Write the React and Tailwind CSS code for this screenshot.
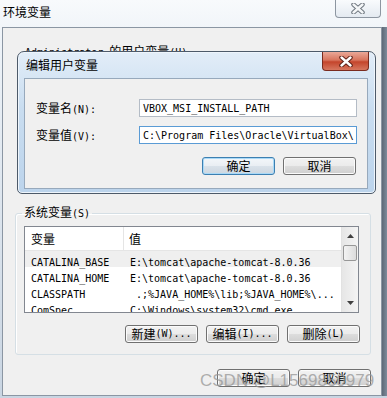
import React from "react";

// ascii parts drawn in a narrow mono face, like SimSun half-width glyphs
const M = ({ children }) => (
  <span className="font-['DejaVu_Sans_Mono',monospace] text-[10px]">{children}</span>
);

const CloseX = ({ edge, fill }) => (
  <svg width="14" height="11" viewBox="0 0 14 11">
    <path d="M2.5 1.5 L11.5 9.5 M11.5 1.5 L2.5 9.5" stroke={edge} strokeWidth="4.4" strokeLinecap="round" fill="none" />
    <path d="M2.5 1.5 L11.5 9.5 M11.5 1.5 L2.5 9.5" stroke={fill} strokeWidth="2.4" strokeLinecap="round" fill="none" />
  </svg>
);

function Btn({ children, focus }) {
  return (
    <div
      className={`flex h-[18px] w-[73px] items-center justify-center rounded-[3px] border text-[12px] leading-none ${
        focus
          ? "border-[#3c7fb1] bg-[linear-gradient(#f3f7fa_0%,#e9eef3_50%,#d9e2ea_50%,#cdd7e0_100%)] shadow-[inset_0_0_0_1px_#a9d9f7]"
          : "border-[#707070] bg-[linear-gradient(#f2f2f2_0%,#ebebeb_50%,#dddddd_50%,#cfcfcf_100%)] shadow-[inset_0_0_0_1px_#fbfbfb]"
      }`}
    >
      {children}
    </div>
  );
}

const Arrow = ({ down }) => (
  <svg width="7" height="4" viewBox="0 0 7 4">
    <path d={down ? "M0 0 H7 L3.5 4 Z" : "M0 4 H7 L3.5 0 Z"} fill="#404040" />
  </svg>
);

const rows = [
  ["CATALINA_BASE", "E:\\tomcat\\apache-tomcat-8.0.36"],
  ["CATALINA_HOME", "E:\\tomcat\\apache-tomcat-8.0.36"],
  ["CLASSPATH", " .;%JAVA_HOME%\\lib;%JAVA_HOME%\\..."],
  ["ComSpec", "C:\\Windows\\system32\\cmd.exe"],
];

export default function App() {
  return (
    <div className="relative h-[398px] w-[387px] overflow-hidden bg-[linear-gradient(180deg,#f8fafc_0%,#eef3f8_10%,#c9d5e2_100%)] font-['Noto_Sans_CJK_SC',sans-serif] text-black">
      {/* outer window title */}
      <div className="h-[27px] pl-[3px] pt-[4px] text-[12px] leading-[16px]">环境变量</div>
      <div className="absolute right-[6px] top-0 flex h-[18px] w-[46px] items-center justify-center rounded-b-[4px] border border-t-0 border-[#8d96a1] bg-[linear-gradient(#f9fbfd,#e4eaf1)]">
        <CloseX edge="#6b737c" fill="#f4f6f8" />
      </div>

      <div className="flex">
        <div className="w-[2px]" />
        {/* client area */}
        <div className="h-[369px] w-[380px] border border-[#8b96a3] bg-[#f0f0f0]">
          <div className="pl-[22px] pt-[15px] text-[12px] leading-[16px]">
            <M>Administrator </M>的用户变量<M>(U)</M>
          </div>
          <div className="h-[143px]" />

          <fieldset className="ml-[12px] w-[356px] rounded-[3px] border border-[#d5dfe5] pb-[11px] shadow-[inset_1px_1px_0_#fff]">
            <legend className="ml-[6px] px-[2px] text-[12px] leading-[16px]">
              系统变量<M>(S)</M>
            </legend>
            <div className="ml-[8px] mt-[4px] flex h-[87px] w-[335px] border border-[#828790] bg-white">
              <div className="flex-1 overflow-hidden">
                <div className="flex h-[24px] items-center border-b border-[#e5e5e5] text-[12px]">
                  <div className="flex h-full w-[99px] items-center border-r border-[#e5e5e5] pl-[6px]">变量</div>
                  <div className="pl-[5px]">值</div>
                </div>
                {rows.map(([k, v], i) => (
                  <div
                    key={k}
                    className={`flex h-[16px] items-center whitespace-pre ${i === 0 ? "bg-[#efefef]" : ""}`}
                  >
                    <div className="w-[99px] pl-[6px]"><M>{k}</M></div>
                    <div className="pl-[6px]"><M>{v}</M></div>
                  </div>
                ))}
              </div>
              {/* scrollbar */}
              <div className="flex w-[17px] flex-col border-l border-[#e2e2e2] bg-[linear-gradient(90deg,#e6e6e6,#f4f4f4)]">
                <div className="flex h-[18px] items-center justify-center"><Arrow /></div>
                <div className="mx-[1px] h-[16px] rounded-[2px] border border-[#979797] bg-[linear-gradient(90deg,#f3f3f3,#dcdcdc)]" />
                <div className="flex-1" />
                <div className="flex h-[18px] items-center justify-center"><Arrow down /></div>
              </div>
            </div>
            <div className="mr-[10px] mt-[12px] flex justify-end gap-[8px]">
              <Btn>新建<M>(W)...</M></Btn>
              <Btn>编辑<M>(I)...</M></Btn>
              <Btn>删除<M>(L)</M></Btn>
            </div>
          </fieldset>

          <div className="mr-[10px] mt-[14px] flex justify-end gap-[8px]">
            <Btn>确定</Btn>
            <Btn>取消</Btn>
          </div>
        </div>
        <div className="h-[369px] w-[5px] bg-[linear-gradient(90deg,#5d6876,#7d8b9b)]" />
      </div>

      {/* edit dialog over the window */}
      <div className="absolute left-[17px] top-[51px] h-[143px] w-[359px] rounded-t-[7px] rounded-b-[5px] border border-[#4d5a69] bg-[linear-gradient(180deg,#e2edf8_0%,#c9ddf0_40%,#bcd4ec_100%)] shadow-[inset_0_0_0_1px_#eef5fc]">
        <div className="flex h-[26px] items-center pl-[8px] text-[12px]">编辑用户变量</div>
        <div className="absolute right-[6px] top-0 flex h-[19px] w-[47px] items-center justify-center rounded-b-[4px] border border-t-0 border-[#7a2b1e] bg-[linear-gradient(#eaa898_0%,#d8745d_45%,#c4452c_55%,#d6775f_100%)]">
          <CloseX edge="#5b1e14" fill="#ffffff" />
        </div>
        <div className="ml-[6px] h-[111px] w-[344px] border border-[#97a9bc] bg-[#f0f0f0] pt-[20px]">
          <div className="flex h-[18px] items-center">
            <div className="w-[114px] pl-[11px] text-[12px]">变量名<M>(N):</M></div>
            <div className="flex h-[18px] w-[218px] items-center border border-[#b4bcc6] bg-white pl-[3px]">
              <M>VBOX_MSI_INSTALL_PATH</M>
            </div>
          </div>
          <div className="mt-[9px] flex h-[18px] items-center">
            <div className="w-[114px] pl-[11px] text-[12px]">变量值<M>(V):</M></div>
            <div className="flex h-[18px] w-[218px] items-center border border-[#5a9bd5] bg-white pl-[3px]">
              <M>C:\Program Files\Oracle\VirtualBox\</M>
            </div>
          </div>
          <div className="mr-[11px] mt-[13px] flex justify-end gap-[8px]">
            <Btn focus>确定</Btn>
            <Btn>取消</Btn>
          </div>
        </div>
      </div>

      {/* watermark */}
      <div className="absolute left-[200px] top-[371px] font-['Liberation_Sans',sans-serif] text-[17px] leading-[20px] text-[rgba(150,150,150,0.75)]">
        CSDN @L1569850979
      </div>
    </div>
  );
}
